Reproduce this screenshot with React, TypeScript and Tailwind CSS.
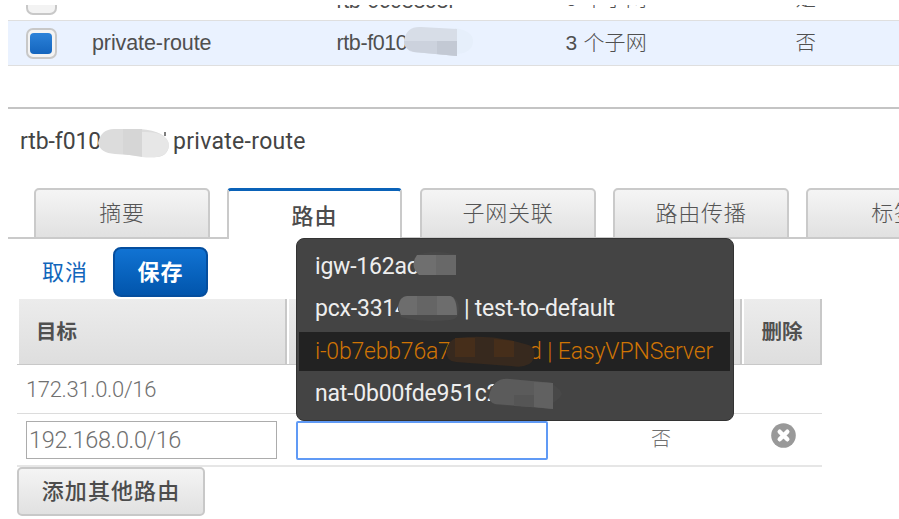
import type { ReactNode } from 'react';

const cjk = "font-['Roboto','Noto_Sans_CJK_SC',sans-serif]";

function Checkbox({ checked }: { checked?: boolean }) {
  return (
    <span className="flex h-[31px] w-[31px] shrink-0 items-center justify-center rounded-[7px] border-2 border-[#c8c8c8] bg-[#f3f3f3]">
      {checked && <span className="h-[21px] w-[22px] rounded-[4px] bg-linear-to-b from-[#2b82d9] to-[#1465be]" />}
    </span>
  );
}

function Redaction({ width, height, className, children }: { width: number; height: number; className: string; children: ReactNode }) {
  return (
    <svg width={width} height={height} viewBox={`0 0 ${width} ${height}`} className={`relative shrink-0 ${className}`}>
      {children}
    </svg>
  );
}

function RouteTableRow({ name, id, subnets, main, selected }: { name: string; id: ReactNode; subnets: string; main: string; selected?: boolean }) {
  return (
    <div className="flex h-11 shrink-0 items-center pl-[17.5px] text-[21.5px] text-[#4f4f4f]">
      <Checkbox checked={selected} />
      <span className="ml-[35.5px] flex w-[244.5px] pt-px font-['Liberation_Sans',sans-serif] tracking-[-0.1px]">{name}</span>
      <span className="flex w-[229px] items-center pt-px font-['Liberation_Sans',sans-serif] tracking-[-0.4px]">{id}</span>
      <span className="w-[230px] font-['Liberation_Sans','Noto_Sans_CJK_SC',sans-serif] text-[21px] font-light tracking-[0.2px]">{subnets}</span>
      <span className="pt-px text-[20.5px] font-light">{main}</span>
    </div>
  );
}

function Tab({ label, active }: { label: string; active?: boolean }) {
  return active ? (
    <div className="flex h-[51px] w-[175px] shrink-0 items-center justify-center rounded-t-[4px] border-x-2 border-t-3 border-x-[#cacaca] border-t-[#0a62b8] bg-white pt-0.5 text-[22px] font-medium tracking-[1px] text-[#4c4c4c]">
      {label}
    </div>
  ) : (
    <div className="flex h-[51px] w-[176px] shrink-0 items-center justify-center rounded-t-[5px] border-2 border-[#cacaca] bg-linear-to-b from-[#f5f5f5] to-[#e1e1e1] text-[22px] font-light tracking-[0.7px] text-[#555]">
      {label}
    </div>
  );
}

function MenuItem({ children, active }: { children: ReactNode; active?: boolean }) {
  return (
    <div className={`flex h-[39px] items-center whitespace-pre pl-4 text-[23px] ${active ? 'bg-[#222] font-light text-[#cf7404]' : 'text-[#eee]'}`}>
      {children}
    </div>
  );
}

function TargetMenu() {
  return (
    <div className="absolute left-[296px] top-[238px] z-10 flex h-[183px] w-[438px] flex-col gap-[3.5px] rounded-[8px] border border-[#333] bg-[#444] pl-[2px] pr-[3px] pt-[8px]">
      <MenuItem>
        <span className="w-[98px] pt-0.5 tracking-[-0.2px]">igw-162ac</span>
        <Redaction width={46} height={25} className="-top-0.5">
          <path d="M4 3Q20-3 46 3Z" fill="#484848" />
          <path d="M4 3H43V23H6Q-4 13 4 3" fill="#6f6f6f" />
          <path d="M23 3H43V23H23Z" fill="#686868" />
        </Redaction>
      </MenuItem>
      <MenuItem>
        <span className="w-[83px] tracking-[-0.2px]">pcx-3314</span>
        <Redaction width={61} height={28} className="-top-0.5">
          <path d="M0 17Q-1 5 8 3H52Q61 5 61 16T52 27Q25 30 3 24Z" fill="#4a4a4a" />
          <path d="M0 14Q2 3 9 3H52Q59 4 59 22H3Z" fill="#6d6d6d" />
          <path d="M19 3H39V22H19Z" fill="#656565" />
        </Redaction>
        <span className="ml-[5px] tracking-[-0.25px]">| test-to-default</span>
      </MenuItem>
      <MenuItem active>
        <span className="w-[131px] pt-0.5 tracking-[-0.2px]">i-0b7ebb76a7</span>
        <Redaction width={89} height={32} className="z-10 -mr-1">
          <path d="M0 15Q3 3 11 2Q47-2 79 8Q91 10 88 22Q84 33 65 30L10 26Q0 25 0 15" fill="#37291e" />
          <path d="M9 2H29V21H9ZM48 3L68 5V21H48Z" fill="#462e1a" />
        </Redaction>
        <span className="-ml-[2px] pt-0.5 tracking-[-0.1px]">d | EasyVPNServer</span>
      </MenuItem>
      <MenuItem>
        <span className="w-[174px] tracking-[-0.2px]">nat-0b00fde951c2</span>
        <Redaction width={74} height={32} className="">
          <path d="M0 18Q4-1 21 1L55 4Q69 6 73 16Q66 29 42 29L7 27Q0 25 0 18" fill="#484848" />
          <path d="M0 18Q4-1 21 1L64 5V31L6 26Q0 24 0 18" fill="#5b5b5b" />
          <path d="M45 4L64 5V31L45 29Z" fill="#616161" />
          <path d="M25 17H45V29L25 28Z" fill="#555" />
        </Redaction>
      </MenuItem>
    </div>
  );
}

export default function App() {
  return (
    <div className={`relative flex h-[519px] w-[899px] flex-col overflow-hidden bg-white pl-2 pt-[5px] whitespace-nowrap ${cjk}`}>
      <div className="flex h-[15px] shrink-0 flex-col justify-end overflow-hidden">
        <div className="relative top-px">
          <RouteTableRow name="" id={<span className="pt-[3px]">rtb-0698898f</span>} subnets="0 个子网" main="是" />
        </div>
      </div>
      <div className="shrink-0 border-y-[1.5px] border-[#dfdfdf] bg-[#eaf2ff]">
        <RouteTableRow
          selected
          name="private-route"
          id={
            <>
              <span className="w-[67px]">rtb-f010</span>
              <Redaction width={70} height={30} className="-top-[3px]">
                <path d="M51 2Q70 5 69 16T53 28Z" fill="#e6effb" />
                <path d="M0 14Q3 0 17 1L53 3V30L9 26Q0 24 0 14" fill="#d7dde7" />
                <path d="M0 15H53V30L10 26Q0 23 0 15" fill="#ccd2dd" />
                <path d="M33 15H53V30L33 28Z" fill="#c3c9d4" />
              </Redaction>
            </>
          }
          subnets="3 个子网"
          main="否"
        />
      </div>
      <div className="mt-[41px] h-[2px] shrink-0 bg-[#c4c4c4]" />
      <h1 className="flex h-[79px] shrink-0 items-center pb-[13px] pl-3 text-[23px] text-[#444]">
        <span className="w-[78px] tracking-[-0.1px]">rtb-f010</span>
        <Redaction width={71} height={31} className="top-px">
          <path d="M0 15Q3 1 16 1H42Q69 3 71 17Q70 33 46 28L17 26Q2 25 0 15" fill="#dcdcdc" />
          <path d="M25 1H44V29L25 26Z" fill="#d6d6d6" />
          <path d="M44 4Q69 3 71 17Q70 32 44 29Z" fill="#e7e7e7" />
          <path d="M67 4V8" stroke="#555" strokeWidth="1.5" />
        </Redaction>
        <span className="ml-[4px] tracking-[0.3px]">private-route</span>
      </h1>

      <div className="flex h-[51px] shrink-0">
        <div className="w-[26px] shrink-0 border-b-2 border-[#cacaca]" />
        <Tab label="摘要" />
        <div className="w-[17px] shrink-0 border-b-2 border-[#cacaca]" />
        <Tab label="路由" active />
        <div className="w-[18px] shrink-0 border-b-2 border-[#cacaca]" />
        <Tab label="子网关联" />
        <div className="w-[17px] shrink-0 border-b-2 border-[#cacaca]" />
        <Tab label="路由传播" />
        <div className="w-[17px] shrink-0 border-b-2 border-[#cacaca]" />
        <Tab label="标签" />
      </div>

      <div className="flex h-[60px] shrink-0 items-center pl-[34px] pt-[6px]">
        <a className="w-[71px] text-[22px] tracking-[1px] text-[#1166bb]">取消</a>
        <button className="flex h-[50px] w-[95px] items-center justify-center rounded-[8px] border-2 border-[#054e9e] bg-linear-to-b from-[#1173d3] to-[#0255ac] text-[22px] font-bold tracking-[1px] text-white">
          保存
        </button>
      </div>

      <div className="ml-[9px] w-[805px] shrink-0 text-[#707070]">
        <div className="flex h-[66px] gap-[2px] border-b-[1.5px] border-[#c8c8c8] pl-[2px] text-[20.5px] font-bold text-[#505050]">
          <div className="flex w-[268px] items-center border-r-2 border-[#c8c8c8] bg-linear-to-b from-[#ececec] to-[#dedede] pl-[17px] pt-0.5">目标</div>
          <div className="w-[453px] border-r-2 border-[#c8c8c8] bg-linear-to-b from-[#ececec] to-[#dedede]" />
          <div className="flex w-[78px] items-center justify-center border-r-2 border-[#c8c8c8] bg-linear-to-b from-[#ececec] to-[#dedede] pt-0.5">删除</div>
        </div>
        <div className="flex h-[49px] items-center border-b border-[#dcdcdc] pl-[9px] text-[22px] font-light tracking-[-0.33px]">172.31.0.0/16</div>
        <div className="flex h-[53px] items-center border-b-2 border-[#e6e6e6] pl-[9px] pt-px">
          <div className="flex h-[38px] w-[251px] items-center border-[1.5px] border-[#acacac] pl-[2px] pt-0.5 text-[23.5px] font-light tracking-[-0.32px]">192.168.0.0/16</div>
          <div className="ml-[19px] h-[39px] w-[252px] rounded-[2px] border-2 border-[#609af5] bg-white" />
          <span className="ml-[103px] w-[120px] pb-[3px] text-[20px] font-light">否</span>
          <svg width="25" height="25" viewBox="0 0 25 25" className="-mt-[9px]">
            <circle cx="12.5" cy="12.5" r="12.3" fill="#999" />
            <path d="M8.7 8.7L16.3 16.3M16.3 8.7L8.7 16.3" stroke="#fff" strokeWidth="4.4" strokeLinecap="round" />
          </svg>
        </div>
      </div>
      <button className="ml-[9px] flex h-[49px] w-[188px] shrink-0 items-center justify-center rounded-[5px] border-2 border-[#c8c8c8] bg-linear-to-b from-[#f4f4f4] to-[#e1e1e1] text-[22px] font-medium tracking-[1.1px] text-[#4c4c4c]">
        添加其他路由
      </button>

      <TargetMenu />
    </div>
  );
}
